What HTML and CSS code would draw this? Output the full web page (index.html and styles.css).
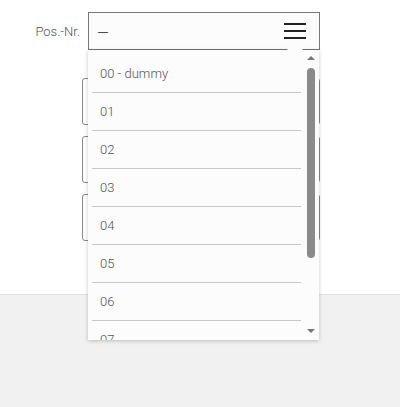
FILE: index.html
```html
<!DOCTYPE html>
<html>
<head>
<meta charset="utf-8">
<link rel="stylesheet" href="styles.css">
</head>
<body>
<div class="page">
  <div class="row">
    <label class="lbl">Pos.-Nr.</label>
    <div class="select">
      <span class="val">—</span>
      <svg class="burger" width="22" height="16" viewBox="0 0 22 16"><path d="M0 1h22M0 8h22M0 15h22" stroke="#222" stroke-width="2"/></svg>
    </div>
  </div>
  <div class="fields">
    <div class="box"></div>
    <div class="box"></div>
    <div class="box"></div>
  </div>
</div>
<div class="footer"></div>
<div class="notch"></div>
<div class="dropdown">
  <ul class="list">
    <li>00 - dummy</li>
    <li>01</li>
    <li>02</li>
    <li>03</li>
    <li>04</li>
    <li>05</li>
    <li>06</li>
    <li>07</li>
  </ul>
  <div class="scroll">
    <div class="arrow up"></div>
    <div class="thumb"></div>
    <div class="arrow down"></div>
  </div>
</div>
</body>
</html>
```
FILE: styles.css
```css
html, body { margin: 0; padding: 0; }
body {
  width: 400px; height: 407px; overflow: hidden; position: relative;
  background: #fff;
  font-family: Roboto, "Noto Sans", sans-serif;
  font-size: 13px; font-weight: 300; color: #666;
}
.page { height: 294px; box-sizing: border-box; padding-top: 12px; }
.row { display: flex; align-items: center; }
.lbl { width: 80px; text-align: right; margin-right: 8px; color: #555; }
.select {
  width: 232px; height: 38px; box-sizing: border-box;
  border: 1px solid #777; background: #fcfcfc;
  display: flex; align-items: center; justify-content: space-between;
  padding: 0 13px 0 9px; color: #222;
}
.val { font-size: 10px; font-family: "Liberation Sans", sans-serif; font-weight: 400; }
.fields { display: flex; flex-direction: column; gap: 11px; margin: 28px 0 0 82px; }
.box { width: 238px; height: 47px; box-sizing: border-box; border: 1px solid #888; border-radius: 3px; }
.footer { height: 113px; background: #f1f1f1; border-top: 1px solid #e2e2e2; box-sizing: border-box; }
.notch {
  position: absolute; left: 287px; top: 42px; width: 0; height: 0;
  border-left: 8px solid transparent; border-right: 8px solid transparent;
  border-bottom: 8px solid #fcfcfc; z-index: 3;
}
.dropdown {
  position: absolute; left: 88px; top: 50px; width: 231px; height: 290px;
  background: #fcfcfc; box-shadow: 0 1px 4px rgba(0,0,0,0.22);
  display: flex; overflow: hidden; z-index: 2;
}
.list { list-style: none; margin: 0; padding: 5px 0 0 4px; width: 209px; }
.list li {
  height: 37px; line-height: 37px; border-bottom: 1px solid #c8c8c8;
  padding-left: 8px; color: #555;
}
.scroll { width: 14px; margin-left: 4px; position: relative; }
.thumb { position: absolute; left: 2px; top: 18px; width: 8px; height: 190px; background: #8a8a8a; border-radius: 4px; }
.arrow { position: absolute; left: 2px; width: 0; height: 0; border-left: 4px solid transparent; border-right: 4px solid transparent; }
.arrow.up { top: 6px; border-bottom: 4px solid #777; }
.arrow.down { top: 279px; border-top: 4px solid #777; }
```
